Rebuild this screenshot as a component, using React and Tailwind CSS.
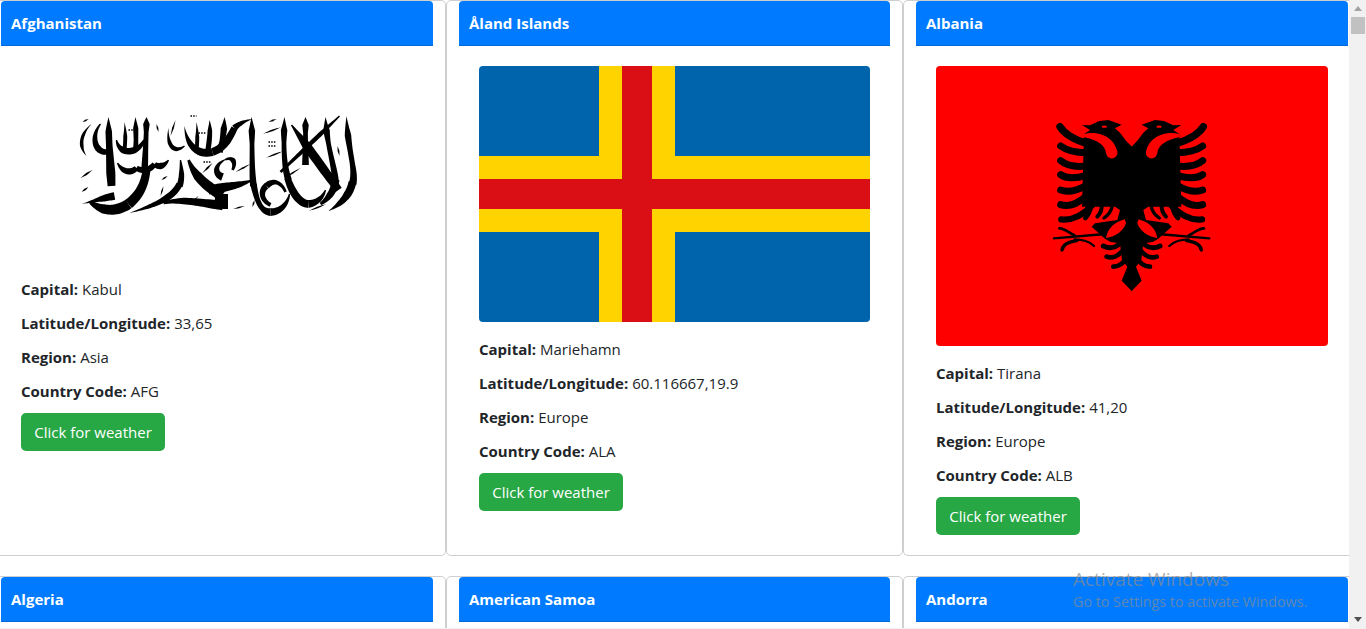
// samples a cubic and outlines it with a varying width, gives the pen-like taper
function brush([x0, y0, x1, y1, x2, y2, x3, y3, widths]) {
  const left = []
  const right = []
  const steps = 24
  for (let i = 0; i <= steps; i++) {
    const t = i / steps
    const u = 1 - t
    const x = u * u * u * x0 + 3 * u * u * t * x1 + 3 * u * t * t * x2 + t * t * t * x3
    const y = u * u * u * y0 + 3 * u * u * t * y1 + 3 * u * t * t * y2 + t * t * t * y3
    const dx = 3 * u * u * (x1 - x0) + 6 * u * t * (x2 - x1) + 3 * t * t * (x3 - x2)
    const dy = 3 * u * u * (y1 - y0) + 6 * u * t * (y2 - y1) + 3 * t * t * (y3 - y2)
    const len = Math.hypot(dx, dy) || 1
    const pos = t * (widths.length - 1)
    const k = Math.min(Math.floor(pos), widths.length - 2)
    const w = (widths[k] + (widths[k + 1] - widths[k]) * (pos - k)) * 1.3
    left.push(`${(x - (dy / len) * w / 2).toFixed(2)} ${(y + (dx / len) * w / 2).toFixed(2)}`)
    right.unshift(`${(x + (dy / len) * w / 2).toFixed(2)} ${(y - (dx / len) * w / 2).toFixed(2)}`)
  }
  return `M${left.join('L')}L${right.join('L')}Z`
}

const line = (x0, y0, x3, y3, widths) => [x0, y0, x0 + (x3 - x0) / 3, y0 + (y3 - y0) / 3, x0 + (x3 - x0) * 2 / 3, y0 + (y3 - y0) * 2 / 3, x3, y3, widths]
const stem = [0, 5, 3.6, 3.8, 4.2, 4.8, 5.2]

const strokes = [
  // la ilaha illa allah
  [348, 116, 349, 150, 358, 170, 354, 184, [0, 5, 4, 4, 5, 6]],
  [354, 182, 351, 196, 342, 204, 330, 211, [6, 6, 4, 0]],
  [327, 117, 328, 145, 336, 165, 337, 182, stem],
  [337, 180, 336, 192, 328, 200, 322, 204, [6, 5, 2]],
  line(293, 125, 340, 190, [1, 7, 7, 6]),
  line(341, 116, 282, 172, [1, 3.5, 3, 2]),
  line(307, 117, 307, 165, stem),
  [286, 117, 285, 145, 285, 165, 290, 180, stem],
  [289, 178, 294, 194, 302, 204, 310, 204, [5, 6, 6, 6]],
  [310, 204, 318, 203, 324, 198, 327, 190, [6, 4, 1]],
  [253, 117, 254, 145, 253, 170, 255, 186, stem],
  [255, 184, 258, 200, 262, 212, 272, 212, [5, 4, 4, 6]],
  [272, 212, 282, 212, 289, 204, 291, 194, [6, 4, 1]],
  [268, 186, 262, 190, 262, 200, 272, 205, [5, 4, 3]],
  [268, 186, 276, 178, 284, 184, 287, 192, [5, 3, 2]],
  // bar and muhammad
  [210, 190, 225, 187, 240, 186, 254, 180, [7, 7, 5, 1]],
  [190, 160, 198, 180, 210, 186, 223, 196, [2, 7, 8, 8]],
  [223, 194, 223, 200, 223, 204, 223, 209, [10, 10, 10]],
  [165, 203, 185, 198, 205, 204, 224, 205, [2, 5, 6, 8]],
  [226, 160, 216, 165, 216, 174, 224, 177, [1, 4, 6]],
  [226, 160, 234, 156, 238, 162, 234, 170, [1, 4, 2]],
  // rasul, sin teeth and bowl
  [131, 213, 150, 207, 174, 200, 181, 184, [0, 3, 5, 5]],
  [181, 186, 184, 178, 183, 170, 182, 160, [5, 4, 1]],
  [83, 204, 95, 201, 105, 198, 116, 196, [0, 2, 5, 6]],
  [92, 202, 104, 212, 118, 212, 130, 204, [3, 7, 8, 8]],
  [130, 204, 140, 196, 146, 186, 148, 170, [8, 7, 6]],
  [119, 163, 124, 172, 132, 174, 138, 168, [1, 4, 5, 4]],
  [138, 168, 144, 172, 152, 170, 156, 164, [4, 5, 4]],
  [156, 164, 160, 168, 166, 166, 170, 160, [4, 5, 1]],
  [110, 117, 110, 140, 112, 165, 113, 186, [0, 5, 5, 6, 7, 6]],
  // first allah
  [148, 117, 148, 130, 147, 150, 146, 172, stem],
  [137, 117, 137, 128, 138, 140, 137, 150, [0, 4, 3.5, 4]],
  [126, 122, 127, 132, 127, 140, 126, 150, [0, 3, 3]],
  [118, 140, 120, 154, 138, 156, 146, 140, [1, 5, 5, 2]],
  [102, 124, 92, 136, 96, 154, 110, 152, [1, 3.5, 5, 4]],
  [93, 124, 82, 134, 80, 146, 88, 156, [0, 2.4, 2.8, 0]],
  // second allah
  [170, 128, 168, 146, 176, 154, 186, 146, [0, 3, 3.5, 1]],
  [186, 126, 188, 146, 200, 156, 214, 152, [0, 4, 6, 6]],
  [214, 152, 226, 148, 232, 136, 236, 128, [6, 6, 5]],
  [236, 128, 240, 124, 246, 121, 254, 119, [5, 3, 0]],
  [226, 117, 226, 128, 224, 142, 221, 152, [0, 5, 4, 5]],
  [211, 120, 212, 130, 211, 142, 209, 152, [0, 3.5, 4, 4]],
  [198, 122, 199, 132, 199, 142, 198, 150, [0, 3, 3]],
  // small marks
  line(264, 134, 283, 127, [0, 1.4, 0]),
  line(267, 158, 285, 151, [0, 1.4, 0]),
  line(310, 211, 328, 204, [0, 1.4, 0]),
  line(94, 170, 82, 178, [0, 1.6, 0]),
  line(90, 187, 83, 192, [0, 1.6, 0]),
  line(84, 122, 90, 119, [0, 1.4, 0]),
  line(192, 204, 200, 196, [0, 1.2, 0]),
  line(204, 173, 214, 163, [0, 1.6, 0]),
  line(286, 178, 302, 168, [0, 1.4, 0]),
  line(235, 209, 246, 206, [0, 1.2, 0]),
  line(254, 207, 256, 200, [0, 1.4, 0]),
  line(339, 146, 341, 156, [0, 1.4, 0]),
  line(158, 124, 160, 132, [0, 1.4, 0]),
  line(172, 136, 177, 120, [0, 1.4, 0]),
  line(237, 172, 252, 164, [0, 1.4, 0]),
  line(163, 180, 169, 176, [0, 1.4, 0]),
  line(162, 196, 165, 186, [0, 1.2, 0]),
  line(270, 122, 278, 119, [0, 1.4, 0]),
]

const teeth = ['M270 146h8', 'M270 142h8', 'M130 130h7', 'M200 133h7', 'M205 162h7', 'M192 116h6']

function AfghanFlag() {
  return (
    <svg viewBox="23 66 391 196" className="block w-full h-[196px] bg-white">
      {strokes.map((s, i) => <path key={i} d={brush(s)} fill="#000" />)}
      <g fill="none" stroke="#000" strokeWidth="1.4" strokeDasharray="1.5 1.2">
        {teeth.map((d) => <path key={d} d={d} />)}
      </g>
    </svg>
  )
}

function AlandFlag() {
  return (
    <svg viewBox="0 0 391 256" className="block w-full h-[256px] rounded">
      <rect width="391" height="256" fill="#0064ad" />
      <rect x="120" width="76" height="256" fill="#ffd300" />
      <rect y="90" width="391" height="76" fill="#ffd300" />
      <rect x="143" width="30" height="256" fill="#da0e15" />
      <rect y="113" width="391" height="30" fill="#da0e15" />
    </svg>
  )
}

// left half of the eagle, mirrored around x=275
function EagleHalf({ flip }) {
  const feathers = [
    ['M60 50C74 72 100 88 140 100', 22],
    ['M62 108C78 120 104 128 140 128', 21],
    ['M62 152C78 166 104 172 140 168', 21],
    ['M62 194C78 206 106 206 140 196', 21],
    ['M62 240C82 248 110 242 140 226', 21],
    ['M62 284C86 292 114 280 140 258', 21],
    ['M64 328C96 332 130 314 156 286', 19],
    ['M152 290C150 304 146 314 136 324', 14],
    ['M185 284C186 298 182 310 172 320', 12],
    ['M216 290C214 302 206 314 192 324', 10],
    ['M190 408C206 416 224 414 236 404', 15],
    ['M200 440C216 446 234 438 246 424', 14],
    ['M220 470C236 470 252 458 260 444', 14],
  ]
  return (
    <g transform={flip ? 'translate(550 0) scale(-1 1)' : undefined}>
      <path d="M277 112L258 92L240 68L225 55L245 44L205 30L178 33L150 46L126 45L150 60L132 72L126 290L225 290L240 300L232 330L165 340L155 350L195 386L212 396L240 400L246 450L262 470L245 512L275 543L277 543Z" fill="#000" />
      <path d="M132 72C165 64 218 72 232 124C236 146 204 156 198 130C196 106 172 90 132 82Z" fill="#f00" />
      <ellipse cx="193" cy="50" rx="8" ry="3.5" fill="#f00" />
      <path d="M254 328C226 336 204 352 198 384C226 380 252 362 258 338Z" fill="#f00" />
      <g fill="none" stroke="#000" strokeLinecap="round">
        {feathers.map(([d, w]) => <path key={d} d={d} strokeWidth={w} />)}
        <path d="M196 372L42 385" strokeWidth="7" />
        <path d="M58 355C72 354 84 366 104 376" strokeWidth="8" />
        <path d="M66 420C68 404 84 396 110 392" strokeWidth="10" />
        <path d="M104 388C122 388 148 394 162 408" strokeWidth="7" />
      </g>
    </g>
  )
}

function AlbaniaFlag() {
  return (
    <svg viewBox="936 66 392 280" className="block w-full h-[280px] rounded">
      <rect x="936" y="66" width="392" height="280" fill="#f00" />
      <g transform="translate(1040 110) scale(.33333)">
        <EagleHalf />
        <EagleHalf flip />
      </g>
    </svg>
  )
}

const rows = [
  [
    { name: 'Afghanistan', capital: 'Kabul', latlng: '33,65', region: 'Asia', code: 'AFG', Flag: AfghanFlag },
    { name: 'Åland Islands', capital: 'Mariehamn', latlng: '60.116667,19.9', region: 'Europe', code: 'ALA', Flag: AlandFlag },
    { name: 'Albania', capital: 'Tirana', latlng: '41,20', region: 'Europe', code: 'ALB', Flag: AlbaniaFlag },
  ],
  [{ name: 'Algeria' }, { name: 'American Samoa' }, { name: 'Andorra' }],
]

const cardClasses = [
  'pl-px pr-3 rounded-r-[5px] border-r',
  'pl-3 pr-3 rounded-[5px] border-x',
  'pl-3 pr-px rounded-l-[5px] border-l',
]

function Field({ label, value }) {
  return (
    <p className="mb-2.5 leading-6">
      <b className="font-bold">{label}:</b> {value}
    </p>
  )
}

function Card({ country, index, tall }) {
  const { name, capital, latlng, region, code, Flag } = country
  return (
    <div className={`bg-white border-y border-[#cfcfcf] ${cardClasses[index]} ${tall ? 'h-[556px]' : 'h-[60px]'}`}>
      <div className="h-[45px] px-2.5 flex items-center bg-[#007bff] border-b border-[#0069d9] rounded-t-[4px] text-white font-bold">
        {name}
      </div>
      {Flag && (
        <div className="p-5">
          <div className="mb-[15px]">
            <Flag />
          </div>
          <Field label="Capital" value={capital} />
          <Field label="Latitude/Longitude" value={latlng} />
          <Field label="Region" value={region} />
          <Field label="Country Code" value={code} />
          <button className="h-[38px] w-[144px] bg-[#28a745] text-white rounded-[5px]">Click for weather</button>
        </div>
      )}
    </div>
  )
}

function Scrollbar() {
  return (
    <div className="w-[17px] shrink-0 bg-[#f1f1f1] flex flex-col items-center justify-between">
      <div className="flex flex-col items-center w-full">
        <div className="mt-[6px] border-x-[4px] border-x-transparent border-b-[5px] border-b-[#a3a3a3]" />
        <div className="mt-[6px] w-[14px] h-[17px] bg-[#c1c1c1]" />
      </div>
      <div className="mb-[7px] border-x-[4px] border-x-transparent border-t-[5px] border-t-[#505050]" />
    </div>
  )
}

export default function App() {
  return (
    <div className="relative flex h-[629px] w-[1366px] overflow-hidden bg-white text-[#212529] text-[15px] font-['Open_Sans','Noto_Sans',sans-serif]">
      <main className="w-[1349px] shrink-0 flex flex-col gap-5 overflow-hidden">
        {rows.map((row, r) => (
          <div key={r} className="grid grid-cols-[446px_457px_446px] shrink-0">
            {row.map((country, i) => (
              <Card key={country.name} country={country} index={i} tall={r === 0} />
            ))}
          </div>
        ))}
      </main>
      <Scrollbar />
      <div className="absolute left-0 right-0 bottom-0 h-px bg-[#f0f0f0]" />
      <div className="absolute left-[1073px] top-[568px] text-[rgba(140,140,140,.7)] pointer-events-none">
        <div className="text-[19px] leading-[22px]">Activate Windows</div>
        <div className="text-[14.3px] leading-[23px]">Go to Settings to activate Windows.</div>
      </div>
    </div>
  )
}
